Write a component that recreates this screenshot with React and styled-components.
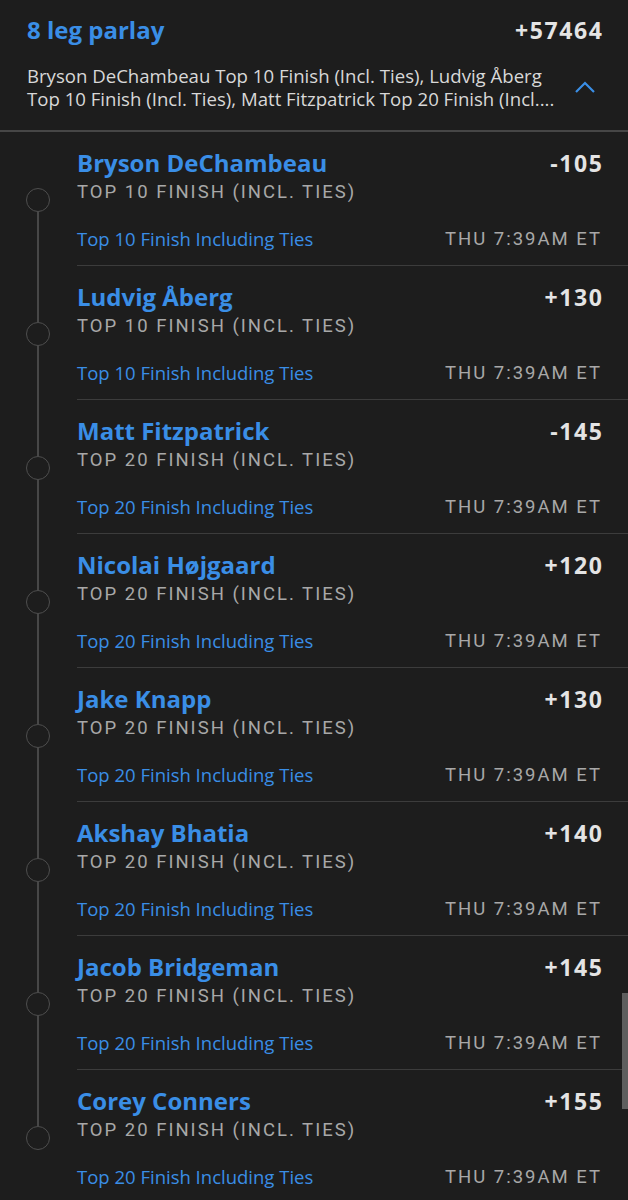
import styled, { createGlobalStyle } from 'styled-components';

const GlobalStyle = createGlobalStyle`
    html, body {
        margin: 0;
        padding: 0;
        background: #1d1d1d;
    }
    * {
        box-sizing: border-box;
    }
`;

const legs = [
    { name: 'Bryson DeChambeau', odds: '-105', top: 10 },
    { name: 'Ludvig Åberg', odds: '+130', top: 10 },
    { name: 'Matt Fitzpatrick', odds: '-145', top: 20 },
    { name: 'Nicolai Højgaard', odds: '+120', top: 20 },
    { name: 'Jake Knapp', odds: '+130', top: 20 },
    { name: 'Akshay Bhatia', odds: '+140', top: 20 },
    { name: 'Jacob Bridgeman', odds: '+145', top: 20 },
    { name: 'Corey Conners', odds: '+155', top: 20 },
];

const Page = styled.div`
    position: relative;
    width: 628px;
    height: 1200px;
    overflow: hidden;
    background: #1d1d1d;
    font-family: 'Roboto', 'Liberation Sans', sans-serif;
`;

const Header = styled.header`
    padding: 16px 26px 20px 27px;
    border-bottom: 2px solid #464646;
`;

const TitleRow = styled.div`
    display: flex;
    justify-content: space-between;
    align-items: center;
    height: 28px;
`;

const Title = styled.h1`
    margin: 0;
    font-family: 'Open Sans', 'Liberation Sans', sans-serif;
    font-weight: 700;
    font-size: 24px;
    line-height: 28px;
    color: #3a8ee6;
`;

const Odds = styled.span`
    font-family: 'Open Sans', 'Liberation Sans', sans-serif;
    font-weight: 700;
    font-size: 23px;
    line-height: 28px;
    letter-spacing: 1.6px;
    margin-right: -1.5px;
    color: #e4e4e4;
`;

const DescRow = styled.div`
    display: flex;
    align-items: center;
    justify-content: space-between;
    margin-top: 20px;
`;

const Desc = styled.p`
    margin: 0;
    font-family: 'Open Sans', 'Liberation Sans', sans-serif;
    font-size: 18.6px;
    line-height: 23px;
    white-space: nowrap;
    color: #d8d8d8;
`;

const Chevron = styled.svg`
    width: 22px;
    height: 14px;
    margin-right: 6px;
    flex-shrink: 0;
`;

const LegList = styled.div`
    display: flex;
    flex-direction: column;
`;

const Leg = styled.div`
    display: flex;
    height: 134px;
`;

const Rail = styled.div`
    width: 77px;
    flex-shrink: 0;
    display: flex;
    flex-direction: column;
    align-items: center;
    padding-right: 1px;
`;

const RailLine = styled.div`
    width: 1.5px;
    background: ${(p) => (p.$hidden ? 'transparent' : '#474747')};
    flex: ${(p) => (p.$grow ? 1 : 'none')};
    height: ${(p) => (p.$grow ? 'auto' : '56px')};
`;

const Dot = styled.div`
    width: 24px;
    height: 24px;
    border-radius: 50%;
    border: 1.5px solid #4e4e4e;
    flex-shrink: 0;
`;

const Body = styled.div`
    flex: 1;
    padding: 17px 26px 14px 0;
    border-bottom: ${(p) => (p.$last ? 'none' : '1.5px solid #3c3c3c')};
`;

const Row = styled.div`
    display: flex;
    justify-content: space-between;
    align-items: center;
    margin-top: ${(p) => p.$gap || 0}px;
`;

const Name = styled.span`
    font-family: 'Open Sans', 'Liberation Sans', sans-serif;
    font-weight: 700;
    font-size: 24px;
    line-height: 28px;
    color: #3a8ee6;
`;

const Market = styled.div`
    margin-top: 3px;
    font-size: 18.5px;
    line-height: 24px;
    letter-spacing: 2px;
    color: #a8a8a8;
`;

const Selection = styled.span`
    font-family: 'Open Sans', 'Liberation Sans', sans-serif;
    font-size: 18.5px;
    line-height: 24px;
    color: #3a8ee6;
`;

const Time = styled.span`
    font-size: 18.5px;
    line-height: 24px;
    letter-spacing: 2px;
    color: #a8a8a8;
`;

const Scrollbar = styled.div`
    position: absolute;
    right: 0;
    top: 993px;
    width: 6px;
    height: 116px;
    background: #5e5e5e;
`;

export default function App() {
    return (
        <>
            <GlobalStyle />
            <Page>
                <Header>
                    <TitleRow>
                        <Title>8 leg parlay</Title>
                        <Odds>+57464</Odds>
                    </TitleRow>
                    <DescRow>
                        <Desc>
                            Bryson DeChambeau Top 10 Finish (Incl. Ties), Ludvig Åberg
                            <br />
                            Top 10 Finish (Incl. Ties), Matt Fitzpatrick Top 20 Finish (Incl....
                        </Desc>
                        <Chevron viewBox="0 0 22 14">
                            <path
                                d="M2 12 L11 3 L20 12"
                                fill="none"
                                stroke="#3a8ee6"
                                strokeWidth="2.2"
                            />
                        </Chevron>
                    </DescRow>
                </Header>
                <LegList>
                    {legs.map((leg, i) => (
                        <Leg key={leg.name}>
                            <Rail>
                                <RailLine $hidden={i === 0} />
                                <Dot />
                                <RailLine $grow $hidden={i === legs.length - 1} />
                            </Rail>
                            <Body $last={i === legs.length - 1}>
                                <Row>
                                    <Name>{leg.name}</Name>
                                    <Odds>{leg.odds}</Odds>
                                </Row>
                                <Market>TOP {leg.top} FINISH (INCL. TIES)</Market>
                                <Row $gap={23}>
                                    <Selection>Top {leg.top} Finish Including Ties</Selection>
                                    <Time>THU 7:39AM ET</Time>
                                </Row>
                            </Body>
                        </Leg>
                    ))}
                </LegList>
                <Scrollbar />
            </Page>
        </>
    );
}
